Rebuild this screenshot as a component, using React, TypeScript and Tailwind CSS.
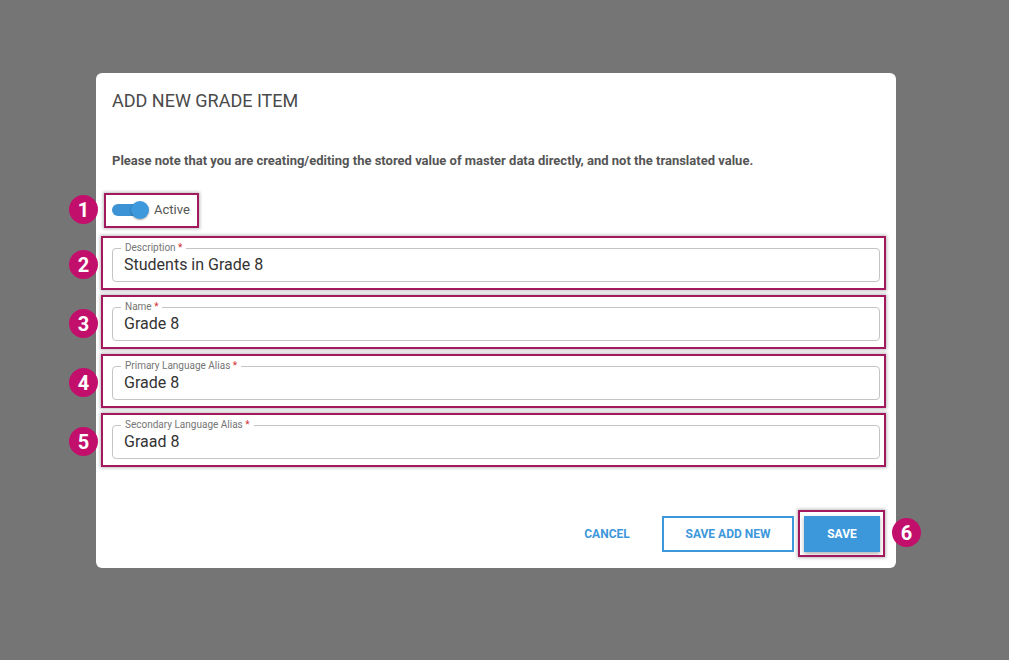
import React from "react";

const font = { fontFamily: "Roboto, 'Liberation Sans', sans-serif" };

function Badge({ n, className }: { n: number; className: string }) {
  return (
    <div
      className={`absolute flex h-[29px] w-[29px] items-center justify-center rounded-full bg-[#c30f6c] text-[20px] font-bold leading-none text-white ${className}`}
    >
      {n}
    </div>
  );
}

function Mark({ className }: { className: string }) {
  return (
    <div
      className={`pointer-events-none absolute border-2 border-[#a3195e] shadow-[0_0_3px_1px_rgba(0,0,0,0.25)] ${className}`}
    />
  );
}

function Field({ label, value, n, first }: { label: string; value: string; n: number; first?: boolean }) {
  return (
    <div className={`relative ${first ? "mt-[26px]" : "mt-[25px]"}`}>
      <div className="relative h-[34px] rounded-[4px] border border-[#c4c4c4]">
        <span className="absolute -top-[7px] left-[8px] bg-white px-[4px] text-[10px] leading-[12px] text-[#757575]">
          {label} <span className="text-[#d32f2f]">*</span>
        </span>
        <div className="flex h-full items-center pl-[11px] text-[16px] text-[#333]">{value}</div>
      </div>
      <Mark className="-left-[11px] -right-[6px] -top-[12px] -bottom-[8px]" />
      <Badge n={n} className="-left-[43px] top-[2px]" />
    </div>
  );
}

export default function App() {
  return (
    <div className="min-h-[660px] w-full bg-[#757575] pt-[73px]" style={font}>
      <div className="ml-[96px] w-[800px] rounded-[6px] bg-white px-4 pb-4 pt-4">
        <h2 className="h-6 text-[18px] leading-6 text-[#4a4a4a]">ADD NEW GRADE ITEM</h2>
        <p className="mt-[40px] text-[13px] font-bold leading-4 text-[#555]">
          Please note that you are creating/editing the stored value of master data directly, and not the translated value.
        </p>

        <div className="relative mt-[29px] flex h-6 w-fit items-center">
          <div className="relative h-[12px] w-[30px] rounded-full bg-[#3b92d4]">
            <div className="absolute -top-[3px] right-[-7px] h-[18px] w-[18px] rounded-full bg-[#3d99dc] shadow-[0_1px_2px_rgba(0,0,0,0.35)]" />
          </div>
          <span className="ml-[12px] text-[13px] text-[#555]">Active</span>
          <Mark className="-left-[8px] -right-[9px] -top-[5px] -bottom-[6px]" />
          <Badge n={1} className="-left-[43px] top-[-3px]" />
        </div>

        <Field first n={2} label="Description" value="Students in Grade 8" />
        <Field n={3} label="Name" value="Grade 8" />
        <Field n={4} label="Primary Language Alias" value="Grade 8" />
        <Field n={5} label="Secondary Language Alias" value="Graad 8" />

        <div className="mt-[57px] flex items-center justify-end">
          <button className="mr-[17px] h-[36px] w-[76px] text-[12px] font-bold text-[#3d98db]">CANCEL</button>
          <button className="mr-[10px] h-[36px] w-[132px] border-2 border-[#3d98db] text-[12px] font-bold text-[#3d98db]">
            SAVE ADD NEW
          </button>
          <div className="relative">
            <button className="h-[36px] w-[76px] bg-[#3d98db] text-[12px] font-bold text-white shadow-[0_2px_4px_rgba(0,0,0,0.3)]">
              SAVE
            </button>
            <Mark className="-left-[6px] -right-[5px] -top-[6px] -bottom-[5px]" />
            <Badge n={6} className="-right-[41px] top-[2px]" />
          </div>
        </div>
      </div>
    </div>
  );
}
